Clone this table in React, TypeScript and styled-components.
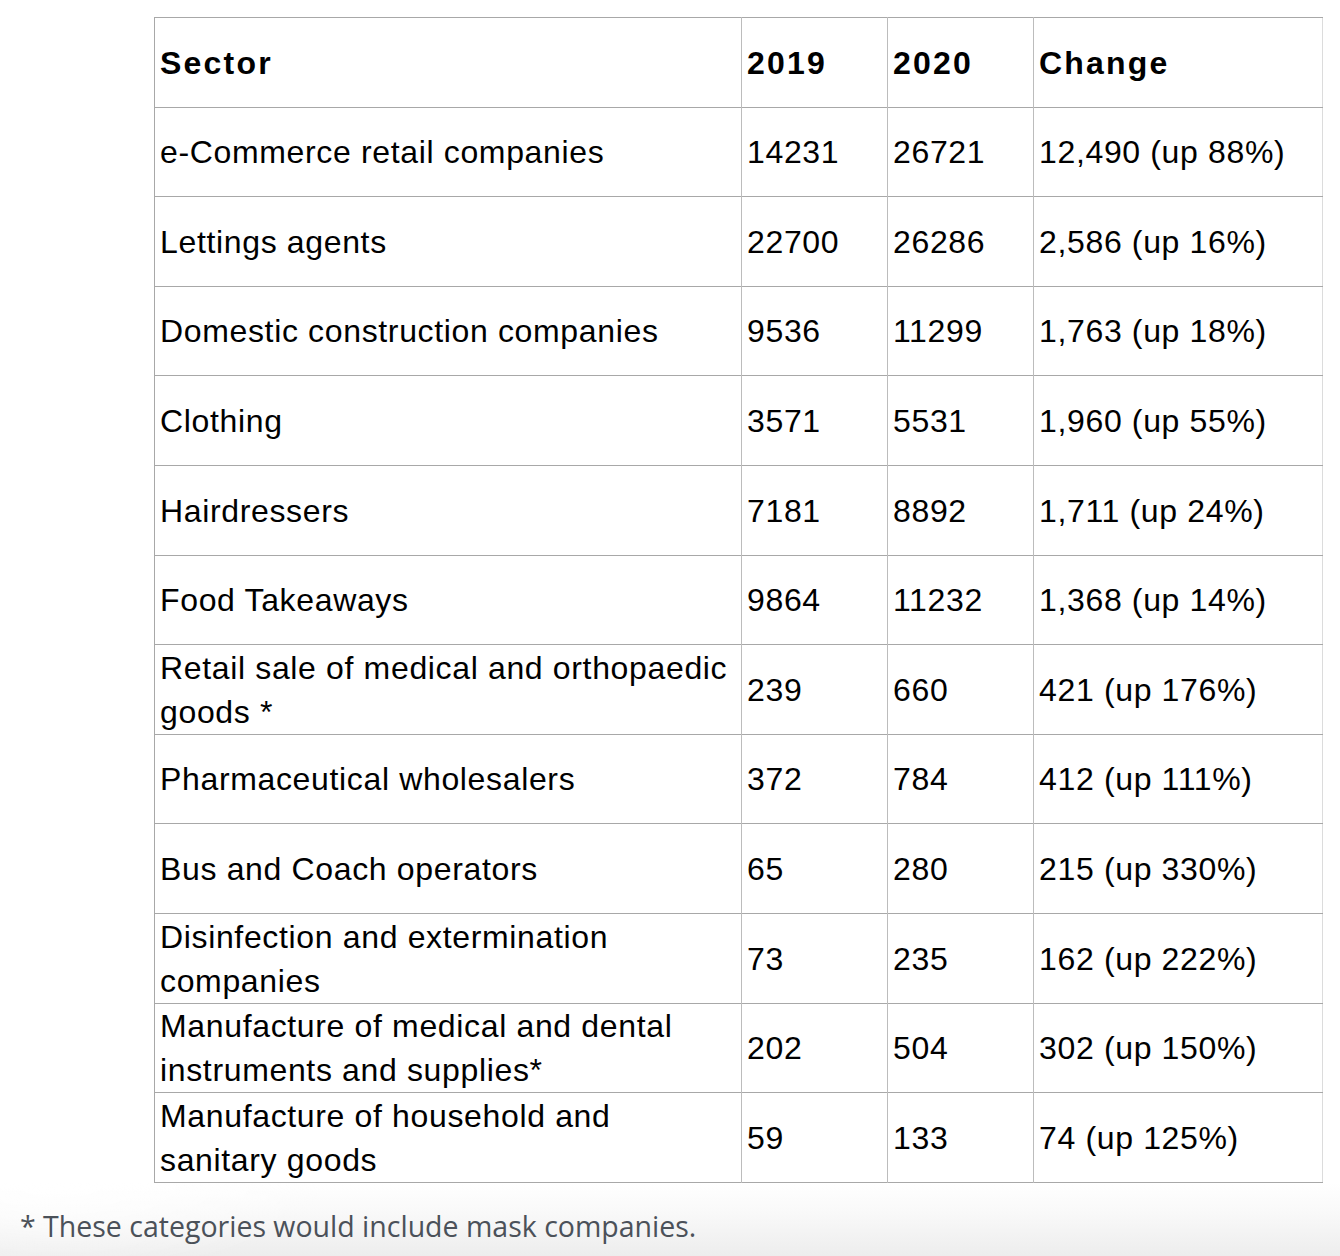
import React from "react";
import styled, { createGlobalStyle } from "styled-components";

const GlobalStyle = createGlobalStyle`
  html, body {
    margin: 0;
    padding: 0;
    background: #ffffff;
  }
`;

const Page = styled.div`
  width: 1340px;
  min-height: 1256px;
  display: flex;
  flex-direction: column;
  background: #ffffff;
`;

const TableWrap = styled.div`
  padding: 17px 0 0 154px;
`;

const Table = styled.table`
  width: 1168px;
  border-collapse: collapse;
  table-layout: fixed;
  font-family: "Liberation Sans", Arial, Helvetica, sans-serif;
  font-size: 32px;
  line-height: 44px;
  color: #000;
  border-left: 1px solid #a8a8a8;
  border-right: 1px solid #dcdcdc;
`;

const Col = styled.col<{ $w: number }>`
  width: ${p => p.$w}px;
`;

const Row = styled.tr`
  height: 89.6px;
  border-top: 1px solid #a8a8a8;
  border-bottom: 1px solid #a8a8a8;
`;

const Cell = styled.td`
  padding: 0.6px 5px 0;
  vertical-align: middle;
  text-align: left;
  font-weight: 400;
  letter-spacing: 0.65px;
  border-left: 1px solid #bcbcbc;
  &:first-child {
    border-left: 1px solid #a8a8a8;
  }
`;

const HeadCell = styled(Cell).attrs({ as: "th" })`
  font-weight: 700;
  letter-spacing: 2.2px;
`;

const Footer = styled.div`
  flex: 1;
  padding: 21px 0 0 20px;
  background:
    radial-gradient(ellipse 260px 90px at 60px 0px, rgba(255, 255, 255, 0.9), rgba(255, 255, 255, 0)),
    linear-gradient(to bottom, #ffffff 0%, #f9f9f9 40%, #ededed 100%);
`;

const Note = styled.p`
  margin: 0;
  font-family: "Open Sans", "Noto Sans", sans-serif;
  font-size: 28.5px;
  line-height: 44px;
  color: #4b5159;
`;

type Entry = {
  sector: string;
  y2019: string;
  y2020: string;
  change: string;
};

const columns = [587, 146, 146, 289];

const rows: Entry[] = [
  { sector: "e-Commerce retail companies", y2019: "14231", y2020: "26721", change: "12,490 (up 88%)" },
  { sector: "Lettings agents", y2019: "22700", y2020: "26286", change: "2,586 (up 16%)" },
  { sector: "Domestic construction companies", y2019: "9536", y2020: "11299", change: "1,763 (up 18%)" },
  { sector: "Clothing", y2019: "3571", y2020: "5531", change: "1,960 (up 55%)" },
  { sector: "Hairdressers", y2019: "7181", y2020: "8892", change: "1,711 (up 24%)" },
  { sector: "Food Takeaways", y2019: "9864", y2020: "11232", change: "1,368 (up 14%)" },
  { sector: "Retail sale of medical and orthopaedic goods *", y2019: "239", y2020: "660", change: "421 (up 176%)" },
  { sector: "Pharmaceutical wholesalers", y2019: "372", y2020: "784", change: "412 (up 111%)" },
  { sector: "Bus and Coach operators", y2019: "65", y2020: "280", change: "215 (up 330%)" },
  { sector: "Disinfection and extermination companies", y2019: "73", y2020: "235", change: "162 (up 222%)" },
  { sector: "Manufacture of medical and dental instruments and supplies*", y2019: "202", y2020: "504", change: "302 (up 150%)" },
  { sector: "Manufacture of household and sanitary goods", y2019: "59", y2020: "133", change: "74 (up 125%)" },
];

const App = () => (
  <Page>
    <GlobalStyle />
    <TableWrap>
      <Table>
        <colgroup>
          {columns.map((w, i) => (
            <Col key={i} $w={w} />
          ))}
        </colgroup>
        <thead>
          <Row>
            <HeadCell>Sector</HeadCell>
            <HeadCell>2019</HeadCell>
            <HeadCell>2020</HeadCell>
            <HeadCell>Change</HeadCell>
          </Row>
        </thead>
        <tbody>
          {rows.map(r => (
            <Row key={r.sector}>
              <Cell>{r.sector}</Cell>
              <Cell>{r.y2019}</Cell>
              <Cell>{r.y2020}</Cell>
              <Cell>{r.change}</Cell>
            </Row>
          ))}
        </tbody>
      </Table>
    </TableWrap>
    <Footer>
      <Note>* These categories would include mask companies.</Note>
    </Footer>
  </Page>
);

export default App;
